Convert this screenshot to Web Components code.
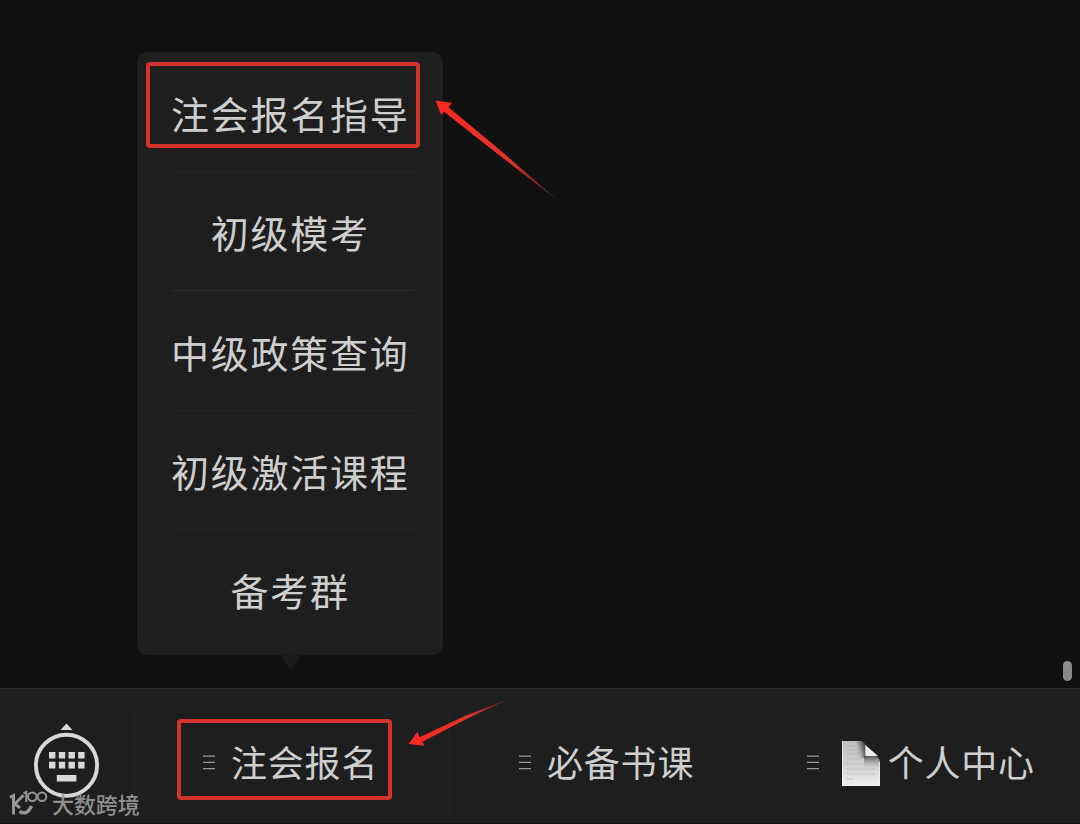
<!DOCTYPE html>
<html lang="zh-CN">
<head>
<meta charset="utf-8">
<title>公众号菜单</title>
<style>
html,body{margin:0;height:100%;overflow:hidden;background:#101010}
body{font-family:"Noto Sans CJK SC","Noto Sans",sans-serif;color:#cecece}
</style>
</head>
<body>
<chat-screen></chat-screen>
<script>
const define = (name, html) => customElements.define(name, class extends HTMLElement {
  constructor() {
    super();
    const t = document.createElement('template');
    t.innerHTML = html;
    this.attachShadow({ mode: 'open' }).append(t.content.cloneNode(true));
  }
});

define('menu-item', `
<style>
:host{display:flex;flex:1;align-items:center;justify-content:center;box-sizing:border-box;
 padding:2px 5.6px 0 0;border-bottom:1px solid var(--line,#262626);white-space:nowrap;font-size:38px;line-height:56px;letter-spacing:1.75px}
:host(:last-child){border-bottom-color:transparent}
</style><slot></slot>`);

define('popup-menu', `
<style>
:host{display:flex;flex-direction:column;box-sizing:border-box;width:306px;height:603px;padding:1px 29px 6px 35px;
 background:#1e1e1e;border-radius:10px;position:relative}
svg{position:absolute;left:144px;top:602px}
</style><slot></slot>
<svg width="20" height="17"><path d="M0 0H20L12 14Q10 17 8 14Z" fill="#1b1b1b"/></svg>`);

define('keyboard-toggle', `
<style>:host{display:flex;padding:33px 0 0 32px;box-sizing:border-box}svg{display:block}</style>
<svg width="70" height="78" fill="#d8d8d8">
<path d="M34.5 1.5L40.5 8H28.5Z"/>
<circle cx="34.5" cy="43.3" r="30.6" fill="none" stroke="#d8d8d8" stroke-width="3.9"/>
<path d="M17 30h6.4v6.6H17zM26.8 30h6.4v6.6h-6.4zM36.5 30h6.4v6.6h-6.4zM46.2 30h6.4v6.6h-6.4zM17 39.8h6.4v6.6H17zM26.8 39.8h6.4v6.6h-6.4zM36.5 39.8h6.4v6.6h-6.4zM46.2 39.8h6.4v6.6h-6.4zM24.8 53h19.6v6.4H24.8z"/>
</svg>`);

define('bar-tab', `
<style>
:host{display:flex;align-items:center;box-sizing:border-box;height:105px;margin-top:22px;border-left:1px solid #232323;
 padding-left:var(--inset,68px);font-size:36px;line-height:52px;letter-spacing:.8px;white-space:nowrap}
.lines{flex:none;width:12px;height:15px;margin-right:16px}
slot,.lines{transform:translateY(-1px)}
.text{display:block;padding-bottom:6px}
</style>
<svg class="lines" viewBox="0 0 12 15"><path d="M0 1.1H12M0 7.4H12M0 13.6H12" stroke="#999" stroke-width="1.4"/></svg>
<slot name="icon"></slot><span class="text"><slot></slot></span>`);

define('doc-icon', `
<style>:host{display:block;width:38px;height:45px;margin:0 8px 0 6.7px;flex:none}svg{display:block}</style>
<svg width="38" height="45">
<defs>
<linearGradient id="p" x2="0" y2="1"><stop stop-color="#bdbdbd"/><stop offset=".55" stop-color="#d2d2d2"/><stop offset="1" stop-color="#efefef"/></linearGradient>
<linearGradient id="s" x1="1" x2="0" y1=".1" y2=".5"><stop stop-color="#333"/><stop offset=".45" stop-color="#666" stop-opacity=".8"/><stop offset="1" stop-color="#aaa" stop-opacity="0"/></linearGradient>
<linearGradient id="b" x2="0" y2="1"><stop stop-color="#444" stop-opacity=".85"/><stop offset="1" stop-color="#999" stop-opacity="0"/></linearGradient>
</defs>
<path d="M0 0H19Q23 2 24 5L35 16Q38 18 38 21V45H0Z" fill="url(#p)"/>
<path d="M14 0H19Q23 2 24 5V17H14Z" fill="url(#s)"/>
<path d="M22 15H36L38 21V27H22Z" fill="url(#b)"/>
<path d="M4 5H17M4 9H17M4 13H18M4 18H21M4 23H22M4 28H33M4 33H33M4 38H12" stroke="#aaa" stroke-opacity=".5"/>
<path d="M23.3 4L36 15H23.5Z" fill="#eee"/>
<path d="M.5 0V44.5H37.5V21" fill="none" stroke="#f1f1f1" stroke-opacity=".7"/>
</svg>`);

define('bottom-bar', `
<style>
:host{display:grid;grid-template-columns:134px 315px 316px 315px;box-sizing:border-box;height:136px;
 background:#1e1e1e;border-top:1px solid #2b2b2b;border-bottom:1px solid #111}
</style><slot></slot>`);

define('red-frame', `
<style>:host{position:absolute;box-sizing:border-box;border:4px solid #d4332b;border-radius:4px}</style>`);

define('red-arrows', `
<style>:host{position:absolute;left:0;top:0}svg{display:block}</style>
<svg width="1080" height="824">
<defs>
<linearGradient id="a" gradientUnits="userSpaceOnUse" x1="436" y1="101" x2="559" y2="201"><stop stop-color="#ff281e"/><stop offset=".6" stop-color="#e0332b"/><stop offset="1" stop-color="#a02a25" stop-opacity=".45"/></linearGradient>
<linearGradient id="c" gradientUnits="userSpaceOnUse" x1="409" y1="744" x2="509" y2="699"><stop stop-color="#ff281e"/><stop offset=".6" stop-color="#e0332b"/><stop offset="1" stop-color="#a02a25" stop-opacity=".45"/></linearGradient>
</defs>
<path fill="url(#a)" d="M435.7 100.7L452 102.7L448.5 107.3L500 150L559 201.5L497 153.5L444 111.8L441 114.8Z"/>
<path fill="url(#c)" d="M408.7 743.9L417.5 731.8L419.5 737.2L466 715.5L509.5 698.7L467 718.8L422.3 741.7L424.5 745.7Z"/>
</svg>`);

define('site-mark', `
<style>
:host{position:absolute;left:8px;top:788px;display:flex;align-items:center;color:#9c9c9c;opacity:.9;font-size:22px;line-height:30px;font-weight:500;letter-spacing:-.1px}
svg{display:block;margin-right:4px}
</style>
<svg width="40" height="30" fill="none" stroke="#a2a2a2">
<path d="M2 9.5L5.5 7.5V26.5M15.5 7.2L7 15.8L12 20" stroke-width="3"/>
<path d="M11.5 23.5Q19 28 23.5 18" stroke-width="3.4"/>
<path d="M15.5 5.5L18.3 4V14" stroke-width="2"/>
<circle cx="24.3" cy="8.8" r="4.3" stroke-width="2"/><circle cx="34" cy="8.8" r="4.3" stroke-width="2"/>
</svg><slot></slot>`);

define('chat-screen', `
<style>
:host{display:flex;flex-direction:column;width:1080px;height:824px;position:relative;background:#101010;overflow:hidden}
main{flex:1;display:flex;justify-content:space-between;align-items:flex-start;padding:52px 8px 0 137px}
.thumb{align-self:flex-end;width:9px;height:20px;margin-bottom:7px;border-radius:4.5px;background:#8b8b8b}
.f1{left:146px;top:62px;width:274px;height:86px}
.f2{left:177px;top:719px;width:215px;height:81px}
</style>
<main>
<popup-menu>
<menu-item>注会报名指导</menu-item>
<menu-item style="--line:#2c2c2c">初级模考</menu-item>
<menu-item>中级政策查询</menu-item>
<menu-item>初级激活课程</menu-item>
<menu-item>备考群</menu-item>
</popup-menu>
<div class="thumb"></div>
</main>
<bottom-bar>
<keyboard-toggle></keyboard-toggle>
<bar-tab>注会报名</bar-tab>
<bar-tab style="--inset:69px">必备书课</bar-tab>
<bar-tab style="--inset:41px"><doc-icon slot="icon"></doc-icon>个人中心</bar-tab>
</bottom-bar>
<red-frame class="f1"></red-frame>
<red-frame class="f2"></red-frame>
<red-arrows></red-arrows>
<site-mark>大数跨境</site-mark>`);
</script>
</body>
</html>
